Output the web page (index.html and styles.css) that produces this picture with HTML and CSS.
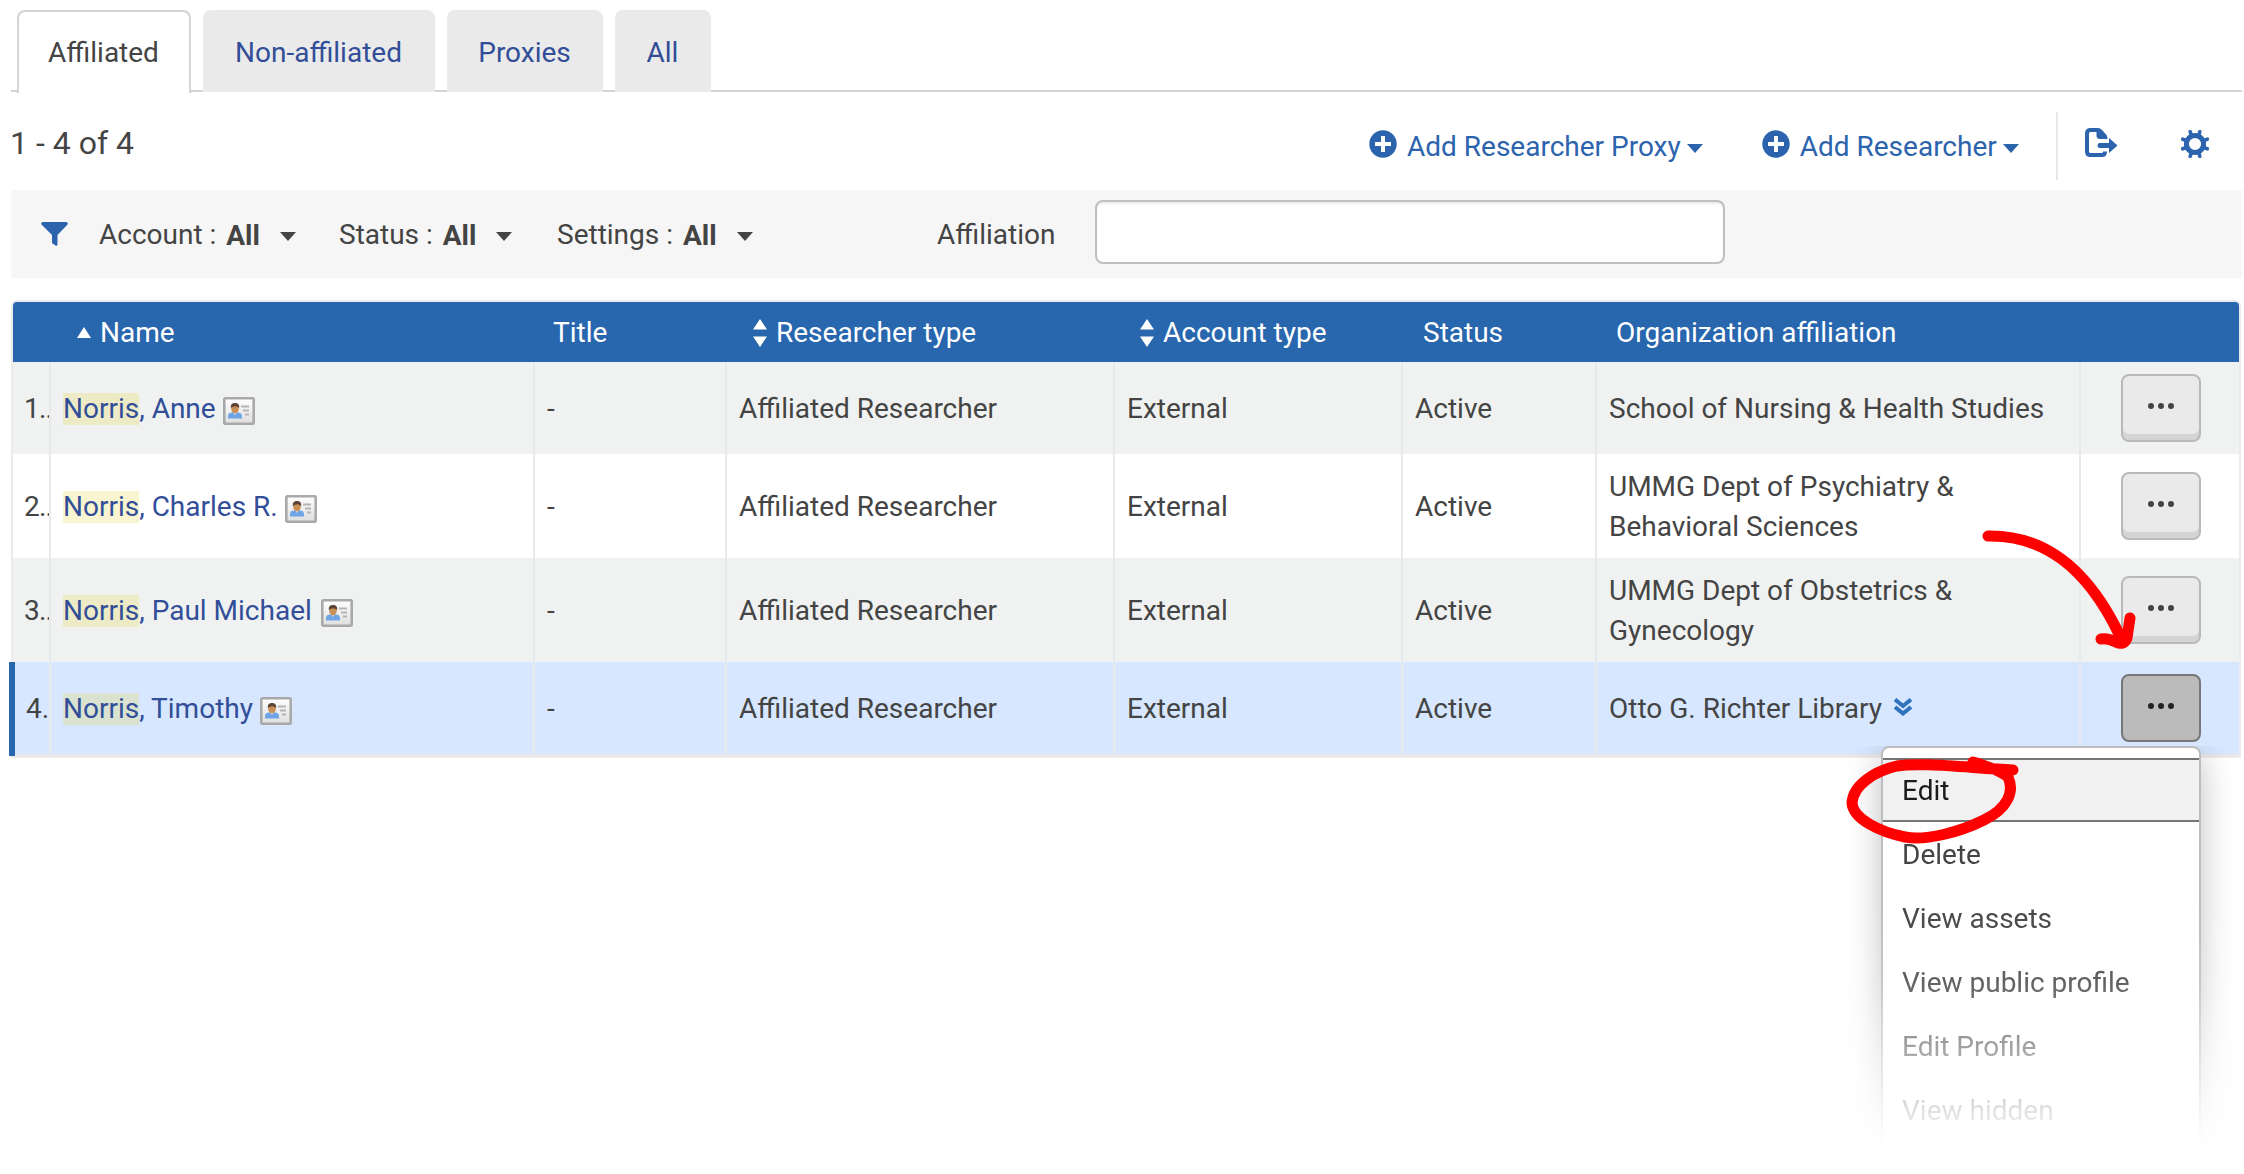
FILE: index.html
```html
<!DOCTYPE html>
<html lang="en">
<head>
<meta charset="utf-8">
<title>Researchers</title>
<link rel="stylesheet" href="styles.css">
</head>
<body>
<svg class="defs" width="0" height="0">
  <defs>
    <linearGradient id="cardbg" x1="0" y1="0" x2="0" y2="1"><stop offset="0" stop-color="#fff"/><stop offset="1" stop-color="#dedede"/></linearGradient>
    <symbol id="card" viewBox="0 0 32 28">
      <rect x="1.3" y="1.3" width="29.4" height="25.400" rx="1" fill="url(#cardbg)" stroke="#a9a9a9" stroke-width="2.6"/>
      <path d="M5 21.500v-2q0-4 4-4h6q4 0 4 4v2z" fill="#6fa5e4"/>
      <path d="M10 14.500l2 3.500 2-3.500z" fill="#fff"/>
      <ellipse cx="12" cy="11.500" rx="3.800" ry="5" fill="#c98f55"/>
      <path d="M7.800 11q-.5-5 4.200-5t4.200 5q-4-3.500-8.400 0z" fill="#5c4335"/>
      <path d="M18 9.500h8M20 13.500h6M22 17.500h4" stroke="#b4b4b4" stroke-width="2" fill="none"/>
    </symbol>
    <symbol id="plus" viewBox="0 0 28 28"><circle cx="14" cy="14" r="13.700" fill="#2c63ad"/><path d="M14 6v16M6 14h16" stroke="#fff" stroke-width="4"/></symbol>
  </defs>
</svg>
<nav class="tabs">
  <a class="tab active">Affiliated</a><a class="tab t2">Non-affiliated</a><a class="tab t3">Proxies</a><a class="tab t4">All</a>
</nav>
<div class="toolbar">
  <div class="count">1 - 4 of 4</div>
  <a class="add"><svg class="plus"><use href="#plus"/></svg><span class="proxy">Add Researcher Proxy</span><i class="caret"></i></a>
  <a class="add second"><svg class="plus"><use href="#plus"/></svg><span>Add Researcher</span><i class="caret"></i></a>
  <div class="tools">
    <svg class="export" width="34" height="32" viewBox="0 0 34 32"><path d="M20 24.500q0 3.500-3 3.500H5.500Q2 28 2 24.500V6.500Q2 3 5.500 3H12q2 0 3 1" fill="none" stroke="#2c63ad" stroke-width="4"/><path d="M11.500 1q3.500 0 5.500 2l4.500 5q1 1.500 1 4h-7.500q-3.500 0-3.500-3.500z" fill="#2c63ad"/><path d="M14.500 16H24v-5l8.500 7.500L24 26v-5h-9.500q-2 0-2-2.500t2-2.500z" fill="#2c63ad"/></svg>
    <svg class="gear" width="28" height="28" viewBox="-14 -14 28 28"><g fill="none" stroke="#2c63ad"><circle r="8.600" stroke-width="5"/><path d="M3.800-9.200L4.800-12.300M-3.800-9.200L-4.800-12.300M3.800 9.200L4.800 12.300M-3.800 9.200L-4.800 12.300M9.200 3.800L12.300 4.800M9.200-3.800L12.300-4.800M-9.200 3.800L-12.300 4.800M-9.200-3.800L-12.300-4.800" stroke-width="3.600" stroke-linecap="round"/></g></svg>
  </div>
</div>
<div class="filters">
  <svg class="funnel" width="27" height="24" viewBox="0 0 27 24"><path d="M1.500 0h24q2 1 1 2.500L16.500 13v9.500q-.5 2-2 1L11 21v-8L.5 2.500Q-.5 1 1.500 0z" fill="#2c63ad"/></svg>
  <span class="filter f1">Account : <b>All</b><i class="caret"></i></span>
  <span class="filter f2">Status : <b>All</b><i class="caret"></i></span>
  <span class="filter f3">Settings : <b>All</b><i class="caret"></i></span>
  <label class="aff">Affiliation</label><input class="field" type="text">
</div>
<table class="grid">
  <colgroup><col class="c0"><col class="c1"><col class="c2"><col class="c3"><col class="c4"><col class="c5"><col class="c6"><col class="c7"></colgroup>
  <thead><tr><th></th><th class="hname"><i class="asc"></i>Name</th><th class="htitle">Title</th><th><svg class="sort" width="14" height="28" viewBox="0 0 14 28"><path d="M0 10.500L7 0l7 10.500zM0 17.500h14L7 28z" fill="#fff"/></svg>Researcher type</th><th class="hacc"><svg class="sort" width="14" height="28" viewBox="0 0 14 28"><path d="M0 10.500L7 0l7 10.500zM0 17.500h14L7 28z" fill="#fff"/></svg>Account type</th><th class="hs">Status</th><th class="hs horg">Organization affiliation</th><th></th></tr></thead>
  <tbody>
  <tr class="short odd"><td class="num">1..</td><td><a><mark>Norris</mark>, Anne</a><svg class="card"><use href="#card"/></svg></td><td>-</td><td>Affiliated Researcher</td><td>External</td><td>Active</td><td>School of Nursing &amp; Health Studies</td><td class="act"><button class="more"><i></i><i></i><i></i></button></td></tr>
  <tr class="tall"><td class="num">2..</td><td><a><mark>Norris</mark>, Charles R.</a><svg class="card"><use href="#card"/></svg></td><td>-</td><td>Affiliated Researcher</td><td>External</td><td>Active</td><td>UMMG Dept of Psychiatry &amp;<br>Behavioral Sciences</td><td class="act"><button class="more"><i></i><i></i><i></i></button></td></tr>
  <tr class="tall odd"><td class="num">3..</td><td><a><mark>Norris</mark>, Paul Michael</a><svg class="card wide"><use href="#card"/></svg></td><td>-</td><td>Affiliated Researcher</td><td>External</td><td>Active</td><td>UMMG Dept of Obstetrics &amp;<br>Gynecology</td><td class="act"><button class="more"><i></i><i></i><i></i></button></td></tr>
  <tr class="short selected"><td class="num four">4.</td><td><a><mark>Norris</mark>, Timothy</a><svg class="card"><use href="#card"/></svg></td><td>-</td><td>Affiliated Researcher</td><td>External</td><td>Active</td><td>Otto G. Richter Library<svg class="chev" width="18" height="18" viewBox="0 0 18 18"><path d="M1 1.500l8 6.500 8-6.500M1 9l8 6.500L17 9" fill="none" stroke="#2f72bd" stroke-width="4"/></svg></td><td class="act"><button class="more on"><i></i><i></i><i></i></button></td></tr>
  </tbody>
</table>
<div class="menuwrap"><ul class="menu"><li class="current">Edit</li><li>Delete</li><li>View assets</li><li>View public profile</li><li>Edit Profile</li><li>View hidden</li></ul></div>
<svg class="ink" width="2244" height="1174" viewBox="0 0 2244 1174">
  <path d="M1988 536C2043 535 2086 566 2119 634M2130 618L2127 638Q2124 646 2116 642Q2108 638 2101 639" fill="none" stroke="#f00" stroke-width="11" stroke-linecap="round" stroke-linejoin="round"/>
  <path d="M1973 762Q2000 770 2008 777C2015 792 2007 809 1984 820C1960 832 1926 841 1905 837C1880 832 1853 819 1852 803C1853 785 1875 771 1897 766C1920 762 1970 768 2013 770" fill="none" stroke="#f00" stroke-width="11" stroke-linecap="round" stroke-linejoin="round"/>
</svg>
</body>
</html>
```
FILE: styles.css
```css
*{box-sizing:border-box}
body{margin:0;width:2244px;height:1174px;overflow:hidden;position:relative;background:#fff;color:#444;font:28px/40px Roboto,"Liberation Sans",sans-serif}
.defs{position:absolute}
.tabs{display:flex;align-items:flex-start;height:92px;margin:0 2px 0 11px;padding:10px 0 0 6px;border-bottom:2px solid #d4d4d4}
.tab{height:82px;padding:23px 1px 0 0;text-align:center;background:#eaeaea;border-radius:8px 8px 0 0;color:#324e99}
.tab.active{width:174px;height:83px;padding-top:21px;border:2px solid #d4d4d4;border-bottom:0;background:#fff;color:#444}
.t2{width:232px;margin-left:12px}.t3{width:156px;margin-left:12px}.t4{width:96px;margin-left:12px}
.toolbar{height:98px;display:flex;align-items:flex-start;padding-left:10px;color:#2c63ad}
.count{width:1359px;font-size:32px;color:#444;padding-top:30px;line-height:42px}
.add{display:flex;align-items:center;margin-top:31px;height:44px}
.add span{padding:4px 6px 0 10px}
.second{margin-left:59px}
.plus{width:28px;height:28px;margin-bottom:2px}
.caret{display:inline-block;border:8px solid transparent;border-top:9px solid currentColor;border-bottom:0}
.add .caret{margin-top:6px;border-width:9px 8px 0}
.tools{margin-left:37px;margin-top:20px;height:68px;border-left:2px solid #e8e8e8;display:flex;flex:1}
.export{margin:15px 0 0 27px}
.gear{margin:18px 0 0 62px}
.filters{height:88px;margin:0 2px 0 11px;background:#f6f6f6;display:flex;align-items:center;padding-left:30px}
.funnel{margin-right:31px}
.filter{display:flex;align-items:center;white-space:pre;color:#444;padding-top:1px}
.filter b{padding:3px 0 0 3px}
.filter .caret{margin:3px 0 0 20px}
.f1{width:240px}.f2{width:218px}.f3{width:380px}
.aff{width:158px;padding-top:1px}
.field{width:630px;height:64px;border:2px solid #bfbfbf;border-radius:8px;background:#fff;box-shadow:inset 0 2px 2px #eee;margin-top:-4px}
.grid{width:2230px;margin:22px 0 0 11px;table-layout:fixed;border-collapse:separate;border-spacing:0;border:2px solid #ebebeb;border-radius:6px 6px 0 0}
.c0{width:38px}.c1{width:484px}.c2{width:192px}.c3{width:388px}.c4{width:288px}.c5{width:194px}.c6{width:484px}.c7{width:158px}
th{height:60px;background:#2866ae;color:#fff;font-weight:400;text-align:left;padding:1px 0 0 26px}
th:first-child{border-radius:4px 0 0}th:last-child{border-radius:0 4px 0 0}
.hs{padding-left:20px}.horg{padding-left:19px}.htitle{padding-left:18px}.hacc{padding-left:25px}
.sort{margin-right:9px;vertical-align:-5px}
.asc{display:inline-block;border:7px solid transparent;border-bottom:11px solid #fff;border-top:0;margin-right:9px;vertical-align:4px}
td{padding:1px 0 0 12px;border-right:2px solid #e8e9e9;white-space:nowrap}
td:last-child{border-right:0}
.short{height:92px}.tall{height:104px}
.odd td{background:#f0f2f1}
.selected{height:94px}
.selected td{background:#d6e7ff;border-bottom:2px solid #e8e8e8}
.num{padding-left:11px;overflow:hidden;letter-spacing:-.8px}
.selected .num{padding-left:13px;position:relative;overflow:visible;letter-spacing:0}
.selected .num::before{content:"";position:absolute;left:-4px;top:0;width:6px;height:94px;background:#2866ae}
td a{color:#324e99}
mark{display:inline-block;height:32px;line-height:32px;background:rgba(228,214,60,.24);color:inherit}
.card{width:32px;height:28px;margin-left:7px;vertical-align:-7px}
.card.wide{margin-left:9px}
.chev{margin-left:12px;vertical-align:2px}
td.act{padding:0 0 0 40px}
.more{display:flex;justify-content:center;gap:4px;width:80px;height:68px;padding:27px 1px 0 0;border:2px solid #b9b9b9;border-radius:8px;background:#eaeaea;box-shadow:inset 0 -6px #d4d4d4}
.more i{width:6px;height:6px;border-radius:50%;background:#444}
.more.on{background:#bbb;border-color:#777;box-shadow:none}
.more.on i{background:#222}
.menuwrap{position:absolute;left:1841px;top:746px;width:400px;height:410px;padding:0 40px;overflow:hidden;-webkit-mask-image:linear-gradient(#000 150px,rgba(0,0,0,.85) 235px,rgba(0,0,0,.5) 300px,rgba(0,0,0,.16) 365px,transparent 406px)}
.menu{list-style:none;margin:0;padding:10px 0;width:320px;height:406px;background:#fff;border:2px solid #bdbdbd;border-radius:8px;box-shadow:0 8px 34px rgba(0,0,0,.25)}
.menu li{height:64px;padding:13px 19px;white-space:nowrap}
.menu .current{height:64px;padding-top:11px;border:solid #757575;border-width:2px 0;background:#f1f1f1;color:#1b1b1b}
.ink{position:absolute;left:0;top:0;pointer-events:none}
```
